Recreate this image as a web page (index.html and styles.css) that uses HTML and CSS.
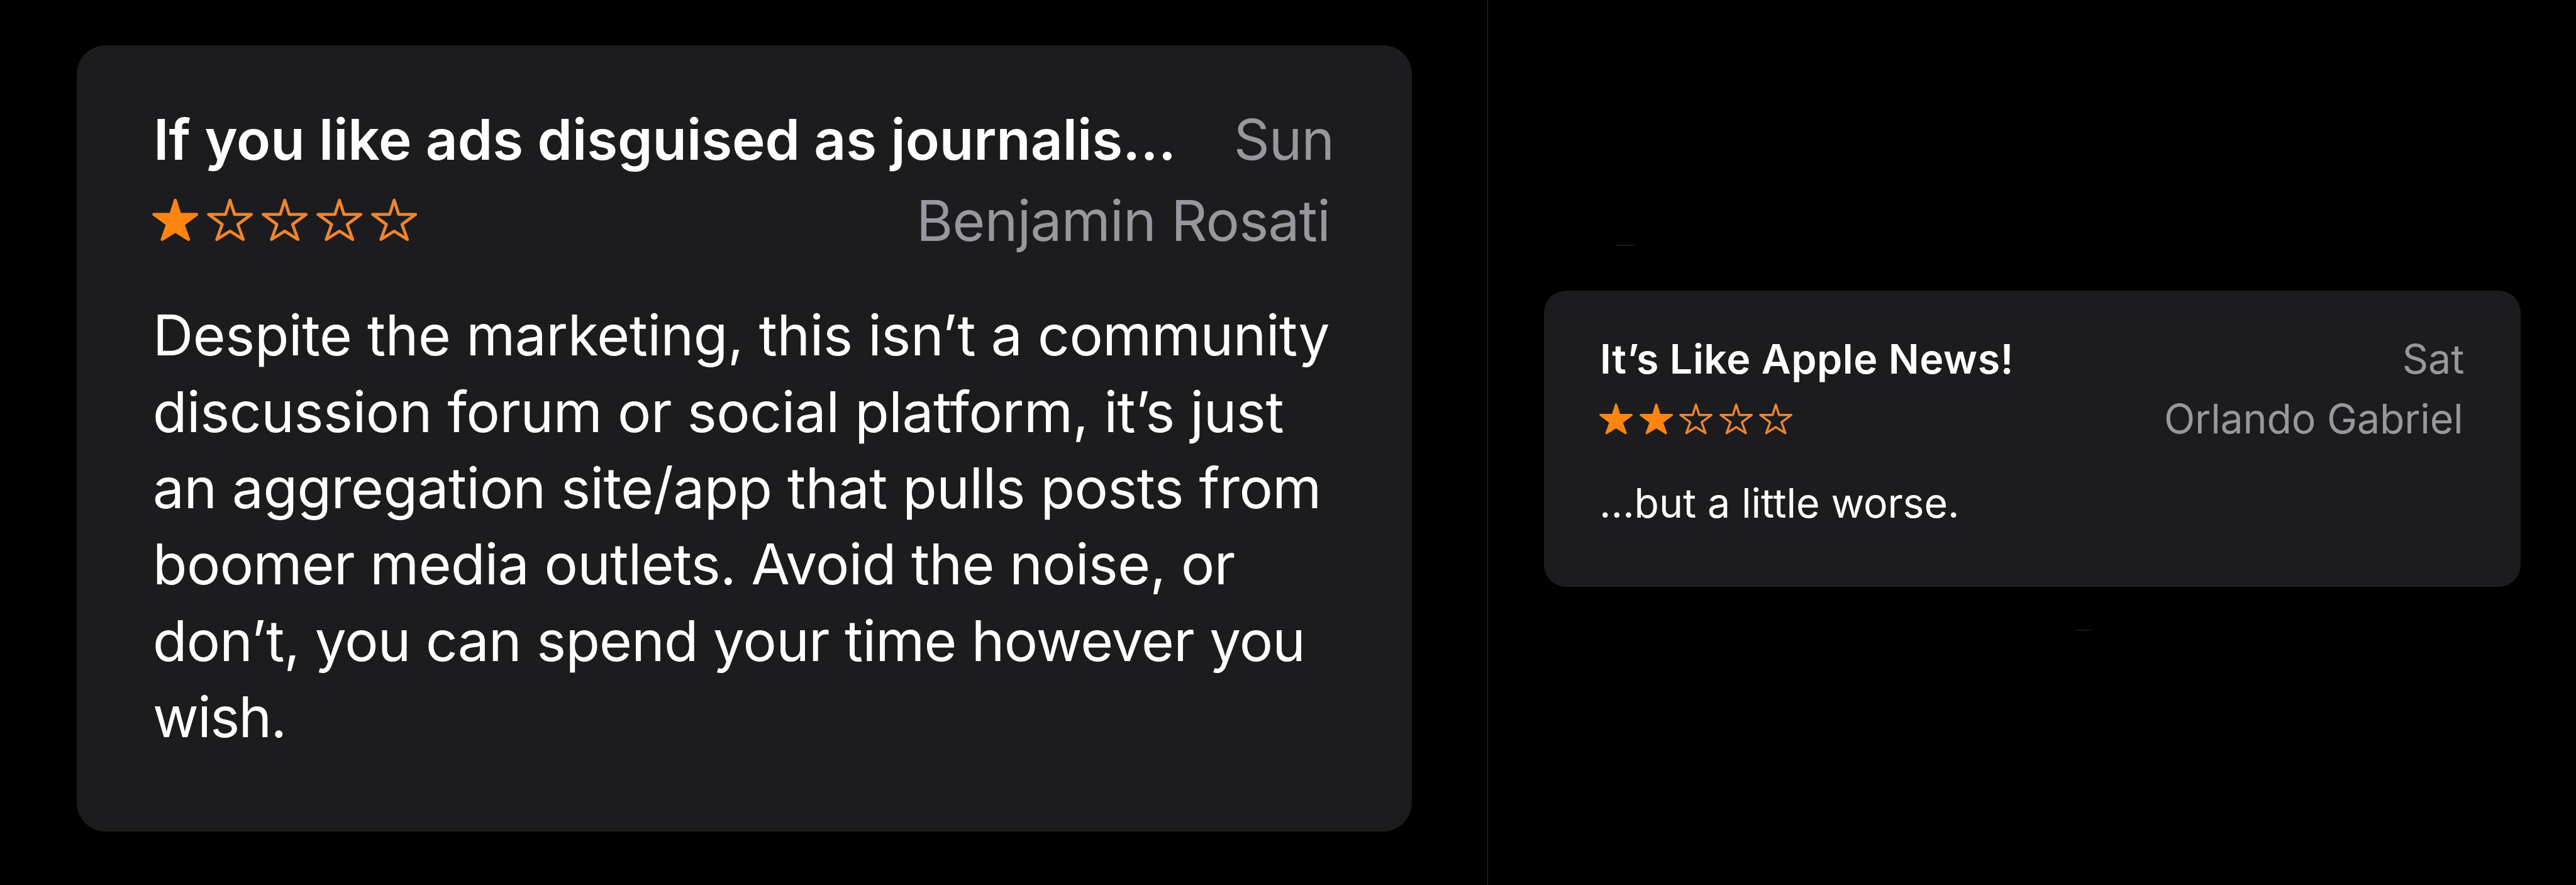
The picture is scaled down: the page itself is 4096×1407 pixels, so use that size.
FILE: index.html
```html
<!DOCTYPE html>
<html>

<head>
    <title>Ratings &amp; Reviews</title>
    <link rel="stylesheet" href="styles.css">
</head>

<body>

    <svg class="sprite">
        <symbol id="star" viewBox="0 0 248 231">
            <path d="M124 10 L148 86 L239 86 L166 140 L195 221 L124 176 L53 221 L82 140 L9 86 L100 86 Z" />
        </symbol>
    </svg>

    <div class="pane pane-left">
        <div class="card card-large">
            <div class="row">
                <h2 class="title">If you like ads disguised as journalis…</h2>
                <span class="date">Sun</span>
            </div>
            <div class="row">
                <div class="stars">
                    <svg class="star full"><use href="#star" /></svg>
                    <svg class="star"><use href="#star" /></svg>
                    <svg class="star"><use href="#star" /></svg>
                    <svg class="star"><use href="#star" /></svg>
                    <svg class="star"><use href="#star" /></svg>
                </div>
                <span class="author">Benjamin Rosati</span>
            </div>
            <p class="text">
                <span>Despite the marketing, this isn’t a community</span>
                <span>discussion forum or social platform, it’s just</span>
                <span>an aggregation site/app that pulls posts from</span>
                <span>boomer media outlets. Avoid the noise, or</span>
                <span>don’t, you can spend your time however you</span>
                <span>wish.</span>
            </p>
        </div>
    </div>

    <div class="pane pane-right">
        <i class="dash dash-top"></i>
        <div class="card card-small">
            <div class="row">
                <h2 class="title">It’s Like Apple News!</h2>
                <span class="date">Sat</span>
            </div>
            <div class="row">
                <div class="stars">
                    <svg class="star full"><use href="#star" /></svg>
                    <svg class="star full"><use href="#star" /></svg>
                    <svg class="star"><use href="#star" /></svg>
                    <svg class="star"><use href="#star" /></svg>
                    <svg class="star"><use href="#star" /></svg>
                </div>
                <span class="author">Orlando Gabriel</span>
            </div>
            <p class="text">
                <span>…but a little worse.</span>
            </p>
        </div>
        <i class="dash dash-bottom"></i>
    </div>

</body>

</html>
```
FILE: styles.css
```css
* {
    box-sizing: border-box;
}

body {
    margin: 0;
    height: 1407px;
    display: flex;
    background: #000;
    font-family: Inter, "Liberation Sans", sans-serif;
    overflow: hidden;
}

.sprite {
    display: none;
}

.pane-left {
    width: 2366px;
    padding: 72px 0 0 122px;
    border-right: 1px solid #303030;
}

.pane-right {
    position: relative;
    flex: 1;
    padding: 462px 0 0 88.5px;
}

.card {
    background: #1c1c1e;
}

.card-large {
    width: 2122.7px;
    height: 1250px;
    padding: 85.3px 123.7px 0 122px;
    border-radius: 46px;
    font-size: 89px;
}

.card-small {
    width: 1553.5px;
    height: 470.5px;
    padding: 62.1px 89.6px 0 89.5px;
    border-radius: 35px;
    font-size: 64.5px;
}

.row {
    display: flex;
    justify-content: space-between;
    align-items: center;
    white-space: nowrap;
}

.card-large .row {
    height: 129.2px;
    line-height: 129.2px;
}

.card-small .row {
    height: 95.3px;
    line-height: 95.3px;
}

.title {
    margin: 0;
    font-size: inherit;
    font-weight: 600;
    color: #fff;
}

.card-large .title {
    letter-spacing: -0.08px;
}

.card-small .title {
    letter-spacing: 0.56px;
}

.date,
.author {
    color: #98979f;
}

.card-large .date {
    letter-spacing: -1px;
}

.card-large .author {
    padding-right: 6px;
    letter-spacing: -0.69px;
}

.card-small .author {
    padding-right: 2px;
    letter-spacing: -0.23px;
}

/* stars */
.stars {
    display: flex;
}

.card-large .stars {
    gap: 13.6px;
    margin: 0 0 3.5px -2px;
}

.card-small .stars {
    gap: 10.3px;
    margin: 0 0 3px -1px;
}

.star {
    display: block;
    fill: none;
    stroke: #f08530;
    stroke-width: 16;
    stroke-linejoin: round;
}

.star.full {
    fill: #ff8510;
    stroke: #ff8510;
}

.card-large .star {
    width: 73.5px;
    height: 69px;
}

.card-small .star {
    width: 53.3px;
    height: 50px;
}

/* review text */
.text {
    margin: 0;
    color: #fff;
    white-space: nowrap;
}

.text span {
    display: block;
}

.card-large .text {
    margin: 56.6px 0 0 -1px;
    line-height: 121.35px;
    letter-spacing: -0.4px;
}

.card-large .text span:nth-child(3) {
    letter-spacing: -0.52px;
}

.card-large .text span:nth-child(4) {
    letter-spacing: -0.61px;
}

.card-large .text span:nth-child(5) {
    letter-spacing: -0.76px;
}

.card-large .text span:nth-child(6) {
    letter-spacing: -1.6px;
}

.card-small .text {
    margin: 41.4px 0 0 -1px;
    line-height: 88px;
    letter-spacing: -0.13px;
}

/* faint marks above and below the small card */
.dash {
    position: absolute;
    height: 2px;
    background: #161616;
}

.dash-top {
    left: 202px;
    top: 389px;
    width: 31px;
}

.dash-bottom {
    left: 935px;
    top: 1001px;
    width: 24px;
}
```
